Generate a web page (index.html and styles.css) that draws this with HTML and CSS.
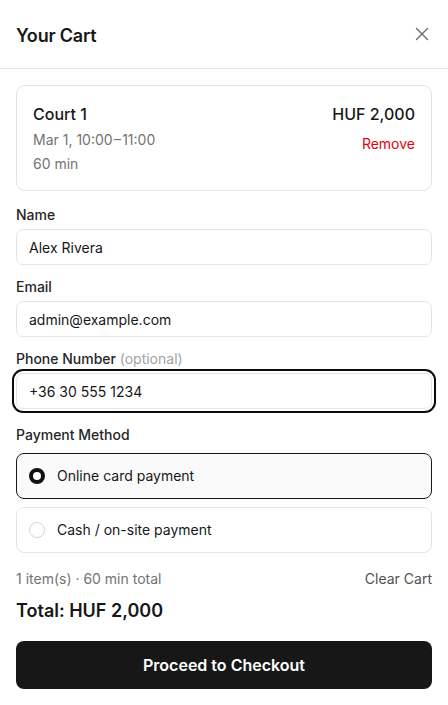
FILE: index.html
```html
<!DOCTYPE html>
<html lang="en">
<head>
<meta charset="utf-8">
<title>Your Cart</title>
<link rel="stylesheet" href="styles.css">
</head>
<body>
<div class="panel">
  <header class="header">
    <h1 class="title">Your Cart</h1>
    <button class="close" aria-label="Close">
      <svg width="16" height="16" viewBox="0 0 16 16" fill="none" stroke="#6b6b6b" stroke-width="1.4" stroke-linecap="round"><path d="M2.5 2.5l11 11M13.5 2.5l-11 11"/></svg>
    </button>
  </header>
  <main class="body">
    <section class="item">
      <div class="item-info">
        <div class="item-name">Court 1</div>
        <div class="item-meta">Mar 1, 10:00&#8202;–&#8202;11:00</div>
        <div class="item-meta">60 min</div>
      </div>
      <div class="item-side">
        <div class="item-price">HUF 2,000</div>
        <button class="remove">Remove</button>
      </div>
    </section>

    <div class="fields">
      <label class="field">
        <span class="label">Name</span>
        <input class="input" type="text" value="Alex Rivera">
      </label>
      <label class="field">
        <span class="label">Email</span>
        <input class="input" type="email" value="admin@example.com">
      </label>
      <label class="field">
        <span class="label">Phone Number <span class="optional">(optional)</span></span>
        <input class="input input-focus" type="tel" value="+36 30 555 1234">
      </label>
    </div>

    <div class="payment">
      <span class="label">Payment Method</span>
      <div class="option option-selected">
        <span class="radio radio-on"></span>
        <span class="option-text">Online card payment</span>
      </div>
      <div class="option">
        <span class="radio"></span>
        <span class="option-text">Cash / on-site payment</span>
      </div>
    </div>

    <div class="summary">
      <span class="summary-text">1 item(s) · 60 min total</span>
      <button class="clear">Clear Cart</button>
    </div>

    <div class="total">Total: HUF 2,000</div>

    <button class="checkout">Proceed to Checkout</button>
  </main>
</div>
</body>
</html>
```

FILE: styles.css
```css
* { box-sizing: border-box; }
html, body { margin: 0; padding: 0; background: #ffffff; }
body {
  font-family: Inter, "Noto Sans", "Liberation Sans", sans-serif;
  color: #171717;
  -webkit-font-smoothing: antialiased;
}
button { font-family: inherit; background: none; border: 0; padding: 0; cursor: pointer; }

.panel { width: 448px; min-height: 705px; display: flex; flex-direction: column; }

.header {
  display: flex;
  align-items: center;
  justify-content: space-between;
  padding: 22px 16px 18px 16px;
  border-bottom: 1px solid #e5e5e5;
  height: 69px;
}
.title { margin: 0; font-size: 18px; line-height: 28px; font-weight: 600; letter-spacing: -0.2px; }
.close { width: 24px; height: 24px; display: flex; align-items: center; justify-content: center; margin-right: -2px; margin-top: -4px; }

.body { padding: 16px; display: flex; flex-direction: column; }

.item {
  border: 1px solid #e5e5e5;
  border-radius: 9px;
  padding: 16px;
  display: flex;
  justify-content: space-between;
  align-items: flex-start;
}
.item-name { font-size: 16px; line-height: 24px; font-weight: 500; }
.item-meta { font-size: 14px; line-height: 20px; color: #737373; margin-top: 4px; }
.item-side { display: flex; flex-direction: column; align-items: flex-end; }
.item-price { font-size: 16px; line-height: 24px; font-weight: 500; }
.remove { font-size: 14px; line-height: 20px; color: #e7000b; margin-top: 8px; }

.fields { display: flex; flex-direction: column; gap: 12px; margin-top: 14px; }
.field { display: flex; flex-direction: column; gap: 4px; }
.label { font-size: 14px; line-height: 20px; font-weight: 500; color: #262626; }
.optional { font-weight: 400; color: #a3a3a3; }

.input {
  width: 100%;
  height: 36px;
  border: 1px solid #e5e5e5;
  border-radius: 7px;
  padding: 0 12px;
  font-family: inherit;
  font-size: 14px;
  color: #171717;
  background: #fff;
  outline: none;
}
.input-focus { outline: 2px solid #0a0a0a; outline-offset: 2px; }

.payment { display: flex; flex-direction: column; gap: 8px; margin-top: 16px; }
.option {
  display: flex;
  align-items: center;
  gap: 12px;
  padding: 12px;
  border: 1px solid #e5e5e5;
  border-radius: 8px;
  background: #fff;
}
.option-selected { border-color: #171717; background: #fafafa; }
.option-text { font-size: 14px; line-height: 20px; }
.radio {
  width: 16px; height: 16px;
  border-radius: 50%;
  border: 1px solid #d4d4d4;
  background: #fff;
  flex: none;
}
.radio-on { border: 4.5px solid #111; background: #fff; }

.summary { display: flex; justify-content: space-between; align-items: center; margin-top: 16px; }
.summary-text { font-size: 14px; line-height: 20px; color: #737373; }
.clear { font-size: 14px; line-height: 20px; color: #525252; }

.total { font-size: 18px; line-height: 28px; font-weight: 600; margin-top: 8px; }

.checkout {
  margin-top: 16px;
  height: 48px;
  border-radius: 8px;
  background: #171717;
  color: #fff;
  font-size: 16px;
  font-weight: 600;
  width: 100%;
}
```
